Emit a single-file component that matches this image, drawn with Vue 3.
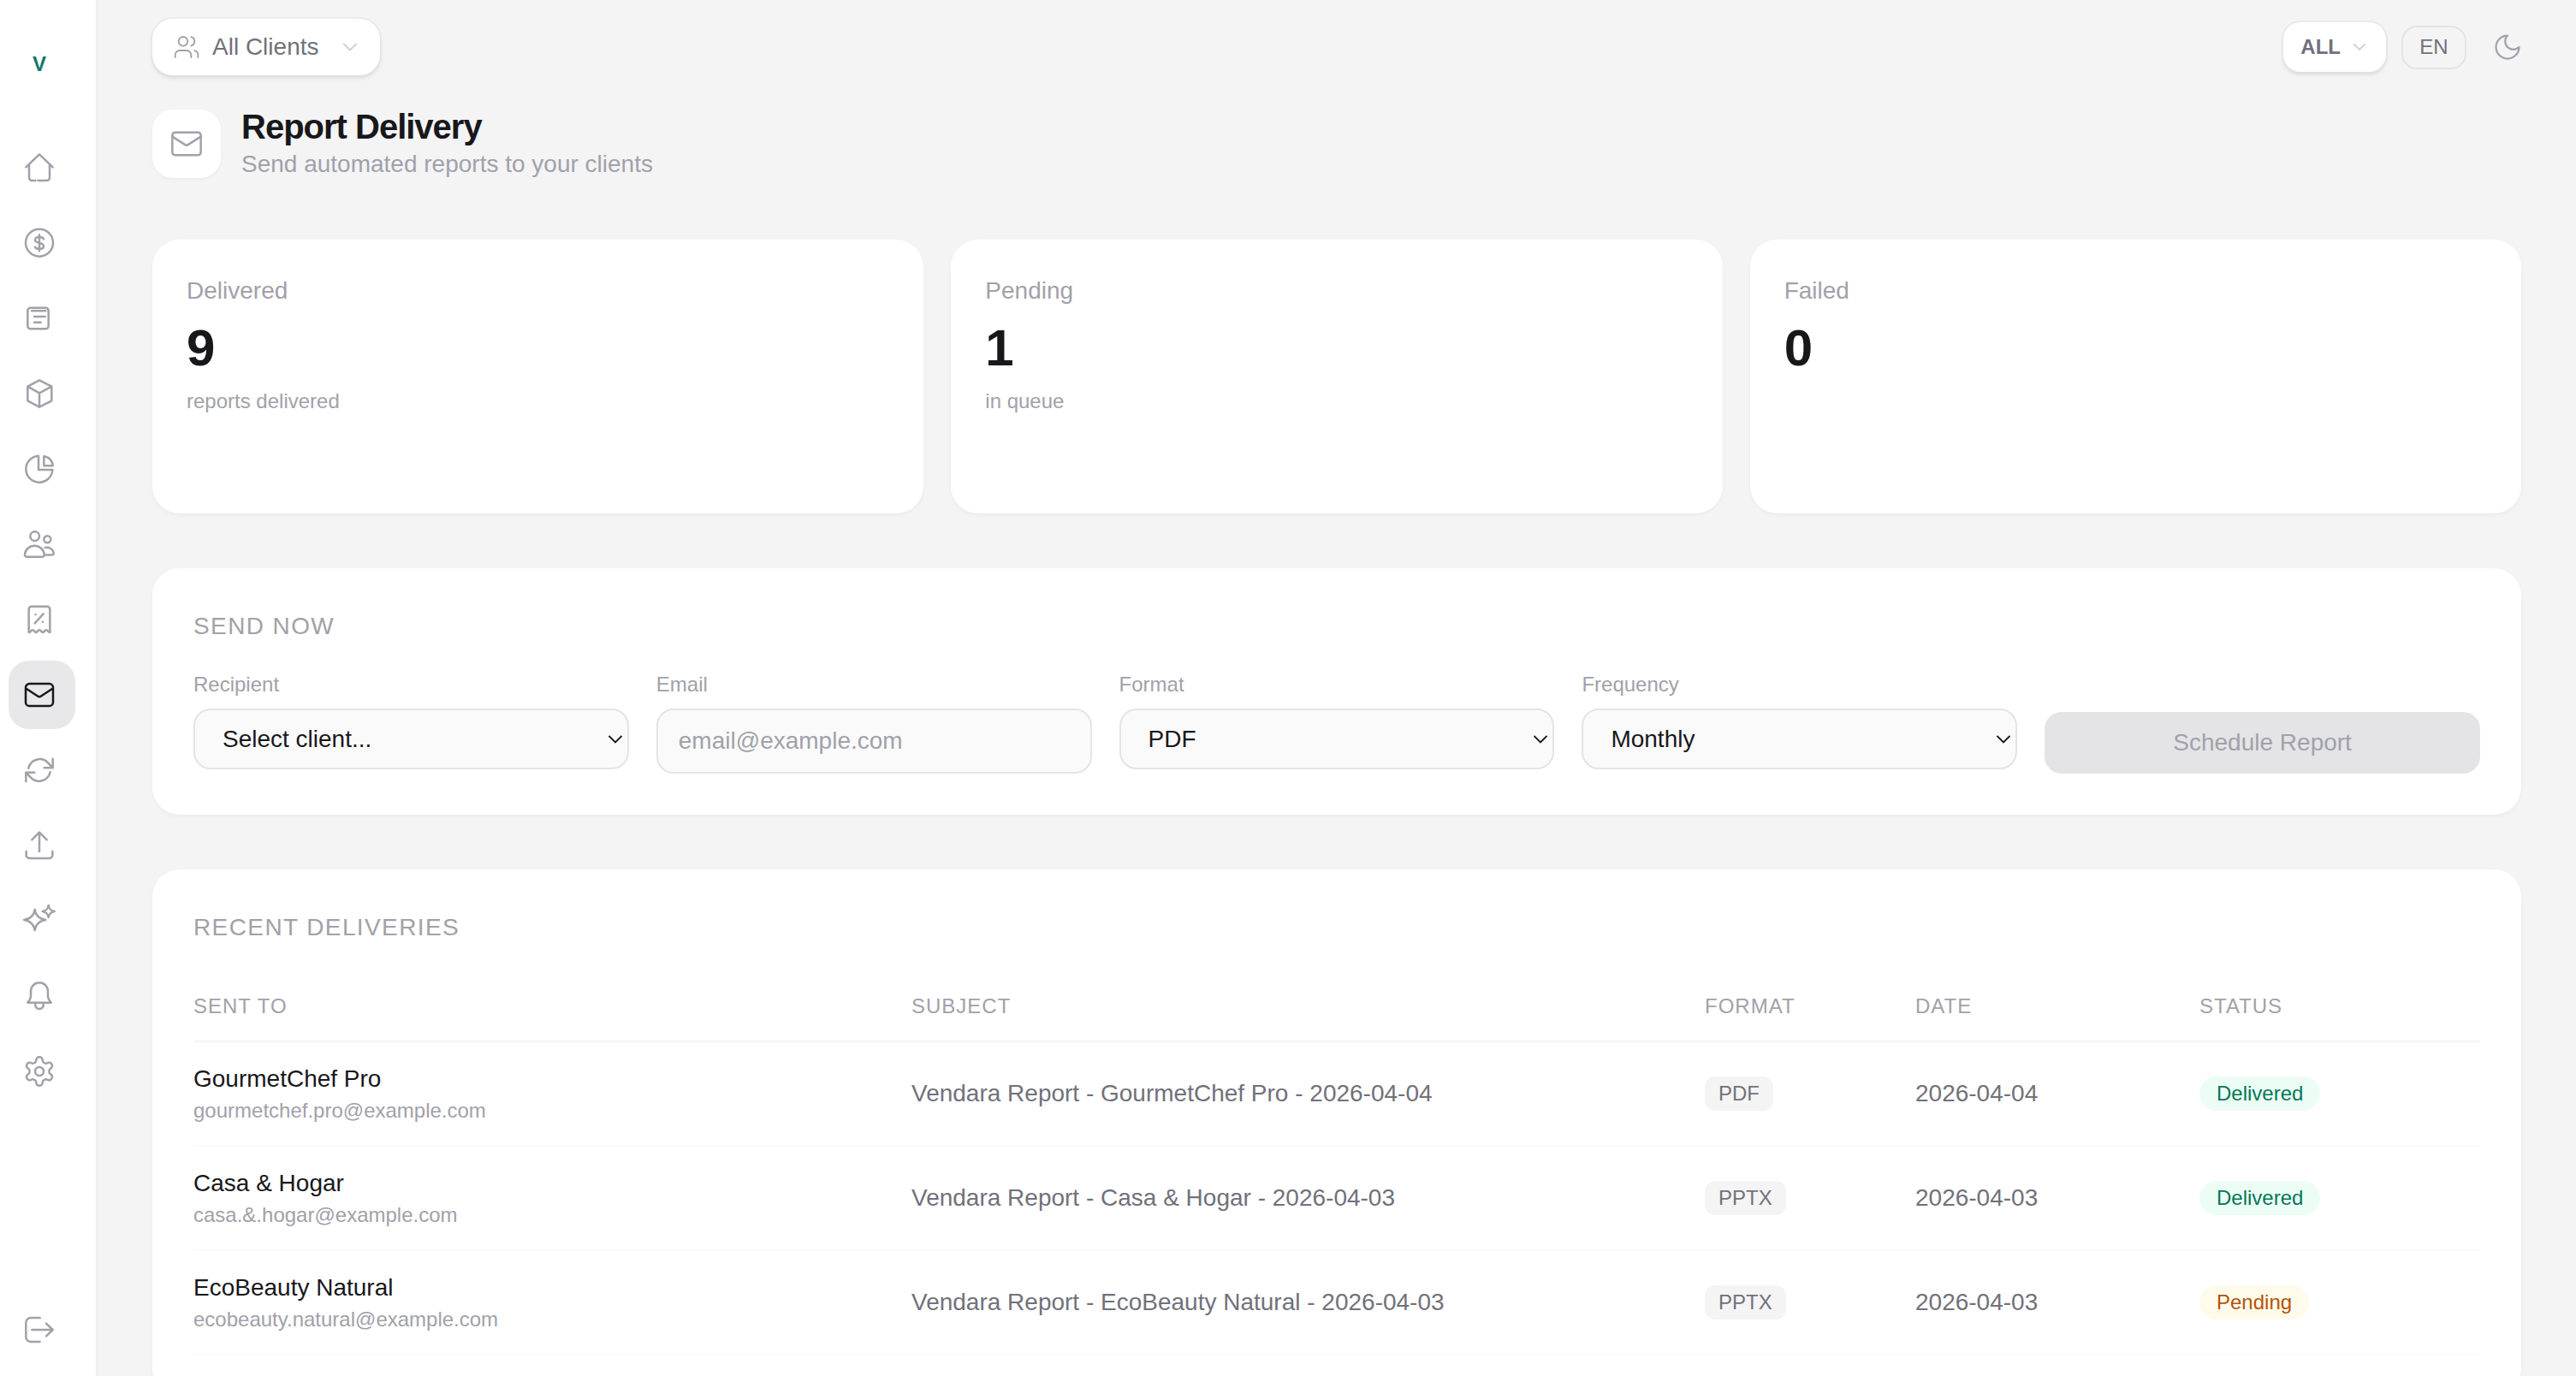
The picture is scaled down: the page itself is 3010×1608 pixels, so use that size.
<template>
  <div class="layout">
    <aside class="sidebar">
      <div class="logo">V</div>
      <nav class="nav">
        <a
          v-for="item in navItems"
          :key="item.name"
          class="nav-item"
          :class="{ active: item.name === 'reports' }"
          :title="item.name"
        >
          <svg class="nav-icon" viewBox="0 0 24 24"><path :d="item.d" /></svg>
        </a>
      </nav>
      <a class="nav-item logout" title="logout">
        <svg class="nav-icon" viewBox="0 0 24 24">
          <path d="M12.4 3H6a3.4 3.4 0 0 0-3.4 3.4v10A3.4 3.4 0 0 0 6 19.8h6.4M6.8 11.4h14.6M16.8 7l4.6 4.4-4.6 4.4" />
        </svg>
      </a>
    </aside>

    <main class="main">
      <header class="topbar">
        <button class="client-switch" type="button">
          <svg class="switch-icon" viewBox="0 0 24 24">
            <path d="M16 21v-2a4 4 0 0 0-4-4H6a4 4 0 0 0-4 4v2M13 7a4 4 0 1 1-8 0 4 4 0 0 1 8 0zM22 21v-2a4 4 0 0 0-3-3.87M16 3.13a4 4 0 0 1 0 7.75" />
          </svg>
          <span>All Clients</span>
          <svg class="switch-chevron" viewBox="0 0 24 24"><path d="m6 9 6 6 6-6" /></svg>
        </button>

        <div class="top-actions">
          <button class="market-switch" type="button">
            <span>ALL</span>
            <svg class="market-chevron" viewBox="0 0 24 24"><path d="m6 9 6 6 6-6" /></svg>
          </button>
          <button class="lang-button" type="button">EN</button>
          <button class="theme-button" type="button">
            <svg class="theme-icon" viewBox="2 2 20 20"><path d="M12 3a6 6 0 0 0 9 9 9 9 0 1 1-9-9Z" /></svg>
          </button>
        </div>
      </header>

      <section class="page-title">
        <div class="title-icon">
          <svg viewBox="0 0 24 24">
            <rect x="2" y="4" width="20" height="16" rx="2" />
            <path d="m22 7-8.97 5.7a1.94 1.94 0 0 1-2.06 0L2 7" />
          </svg>
        </div>
        <div>
          <h1>Report Delivery</h1>
          <p>Send automated reports to your clients</p>
        </div>
      </section>

      <section class="stats">
        <div v-for="stat in stats" :key="stat.label" class="stat-card">
          <div class="stat-label">{{ stat.label }}</div>
          <div class="stat-value">{{ stat.value }}</div>
          <div v-if="stat.note" class="stat-note">{{ stat.note }}</div>
        </div>
      </section>

      <section class="card send-card">
        <h2>SEND NOW</h2>
        <form class="send-form" @submit.prevent>
          <label class="field">
            <span>Recipient</span>
            <div class="select-wrap">
              <select v-model="recipient">
                <option value="">Select client...</option>
                <option v-for="row in deliveries" :key="row.name">{{ row.name }}</option>
              </select>
              <svg class="select-arrow" viewBox="0 0 18 10"><path d="M1.5 1 9 8.5 16.5 1" /></svg>
            </div>
          </label>
          <label class="field">
            <span>Email</span>
            <input type="email" placeholder="email@example.com" />
          </label>
          <label class="field">
            <span>Format</span>
            <div class="select-wrap">
              <select>
                <option>PDF</option>
                <option>PPTX</option>
              </select>
              <svg class="select-arrow" viewBox="0 0 18 10"><path d="M1.5 1 9 8.5 16.5 1" /></svg>
            </div>
          </label>
          <label class="field">
            <span>Frequency</span>
            <div class="select-wrap">
              <select>
                <option>Monthly</option>
                <option>Weekly</option>
              </select>
              <svg class="select-arrow" viewBox="0 0 18 10"><path d="M1.5 1 9 8.5 16.5 1" /></svg>
            </div>
          </label>
          <button class="schedule-button" type="submit" disabled>Schedule Report</button>
        </form>
      </section>

      <section class="card table-card">
        <h2>RECENT DELIVERIES</h2>
        <table class="table">
          <thead>
            <tr>
              <th class="col-name">SENT TO</th>
              <th class="col-subject">SUBJECT</th>
              <th class="col-format">FORMAT</th>
              <th class="col-date">DATE</th>
              <th>STATUS</th>
            </tr>
          </thead>
          <tbody>
            <tr v-for="row in deliveries" :key="row.name">
              <td>
                <div class="client-name">{{ row.name }}</div>
                <div class="client-email">{{ row.email }}</div>
              </td>
              <td class="muted">Vendara Report - {{ row.name }} - {{ row.date }}</td>
              <td><span class="format-badge">{{ row.format }}</span></td>
              <td class="muted">{{ row.date }}</td>
              <td><span class="status-badge" :class="row.status.toLowerCase()">{{ row.status }}</span></td>
            </tr>
          </tbody>
        </table>
      </section>
    </main>
  </div>
</template>

<script setup>
import { ref } from 'vue'

const recipient = ref('')

const navItems = [
  { name: 'home', d: 'M2.6 11.6 12 2.6l9.4 9M4.8 9.8V19a2 2 0 0 0 2 2h2.4M11 21h6.2a2 2 0 0 0 2-2V9.8' },
  { name: 'revenue', d: 'M12 2.2a9.6 9.6 0 1 0 0 19.2 9.6 9.6 0 0 0 0-19.2zM15 9.2c-.4-1-1.6-1.4-3-1.4-1.8 0-3 .9-3 2.1 0 2.7 6 1.5 6 4.2 0 1.2-1.2 2.1-3 2.1-1.4 0-2.6-.5-3-1.5M12 6.2v11.4' },
  { name: 'orders', d: 'M5.8 4.6h10.6a2 2 0 0 1 2 2v10.8a2 2 0 0 1-2 2H5.8a2 2 0 0 1-2-2V6.6a2 2 0 0 1 2-2zM6.6 6.8h9.8M8.4 10.8H16M8.4 14.8H13' },
  { name: 'products', d: 'M12 2.6 20.6 7v10L12 21.4 3.8 17V7zM3.8 7l8.2 4.6L20.6 7M12 11.6v9.8' },
  { name: 'analytics', d: 'M11.4 2.8a9.3 9.3 0 1 0 9.8 9.8h-9.8zM15.2 3.2v6.6h6.2a6.8 6.8 0 0 0-6.2-6.6z' },
  { name: 'clients', d: 'M12 6.4a3.2 3.2 0 1 1-6.4 0 3.2 3.2 0 0 1 6.4 0zM20 8.6a2.4 2.4 0 1 1-4.8 0 2.4 2.4 0 0 1 4.8 0zM8.6 13c-3.6 0-6.6 2.8-6.8 6.4-.1.9.6 1.5 1.4 1.5H14c.8 0 1.5-.6 1.4-1.5C15.2 15.8 12.2 13 8.6 13zM16 14.4c2.8-.6 5.6 1 6 3.8.1.8-.5 1.3-1.2 1.3H15.6' },
  { name: 'invoices', d: 'M4.6 21V4.8a2 2 0 0 1 2-2h10.8a2 2 0 0 1 2 2V21c-1 .2-1.6-1.6-2.6-1.6-1.2 0-1.6 1.6-2.4 1.6s-1.2-1.6-2.4-1.6-1.6 1.6-2.4 1.6-1.2-1.6-2.4-1.6-1.6 1.8-2.6 1.6zM14.8 8l-6 6.6M9.4 8.4h.01M14.4 13.6h.01' },
  { name: 'reports', d: 'M5 4.2h14a2.6 2.6 0 0 1 2.6 2.6v10.4a2.6 2.6 0 0 1-2.6 2.6H5a2.6 2.6 0 0 1-2.6-2.6V6.8A2.6 2.6 0 0 1 5 4.2zM2.6 7.5l8.2 5.4a2.2 2.2 0 0 0 2.4 0l8.2-5.4' },
  { name: 'sync', d: 'M4.4 10.6A8 8 0 0 1 18 6.8l3.4 3.6M21.4 4v6.4h-6M19.6 13.4A8 8 0 0 1 6 17.2l-3.4-3.6M2.6 20v-6.4h6' },
  { name: 'uploads', d: 'M12 16.2V2.8M6.8 8 12 2.8 17.2 8M2.8 16.2v2.6A2.2 2.2 0 0 0 5 21h14a2.2 2.2 0 0 0 2.2-2.2v-2.6' },
  { name: 'insights', d: 'M8.8 4.2c.4 3.6 3.2 6.6 7.5 7.2-4.3.6-7.1 3.6-7.5 7.2-.4-3.6-3.2-6.6-7.5-7.2 4.3-.6 7.1-3.6 7.5-7.2zM18.4 1.2c.2 2 2 3.8 4.2 4.2-2.2.4-4 2.2-4.2 4.2-.2-2-2-3.8-4.2-4.2 2.2-.4 4-2.2 4.2-4.2z' },
  { name: 'alerts', d: 'M12 2.6c-3.4 0-6 2.7-6 6V12c0 1.8-1 3.2-2.2 4.6h16.4c-1.2-1.4-2.2-2.8-2.2-4.6V8.6c0-3.3-2.6-6-6-6zM9 16.8c0 2.6 1.2 4.2 3 4.2s3-1.6 3-4.2' },
  { name: 'settings', d: 'M12.22 2h-.44a2 2 0 0 0-2 2v.18a2 2 0 0 1-1 1.73l-.43.25a2 2 0 0 1-2 0l-.15-.08a2 2 0 0 0-2.73.73l-.22.38a2 2 0 0 0 .73 2.73l.15.1a2 2 0 0 1 1 1.72v.51a2 2 0 0 1-1 1.74l-.15.09a2 2 0 0 0-.73 2.73l.22.38a2 2 0 0 0 2.73.73l.15-.08a2 2 0 0 1 2 0l.43.25a2 2 0 0 1 1 1.73V20a2 2 0 0 0 2 2h.44a2 2 0 0 0 2-2v-.18a2 2 0 0 1 1-1.73l.43-.25a2 2 0 0 1 2 0l.15.08a2 2 0 0 0 2.73-.73l.22-.39a2 2 0 0 0-.73-2.73l-.15-.08a2 2 0 0 1-1-1.74v-.5a2 2 0 0 1 1-1.74l.15-.09a2 2 0 0 0 .73-2.73l-.22-.38a2 2 0 0 0-2.73-.73l-.15.08a2 2 0 0 1-2 0l-.43-.25a2 2 0 0 1-1-1.73V4a2 2 0 0 0-2-2zM15 12a3 3 0 1 1-6 0 3 3 0 0 1 6 0z' }
]

const stats = [
  { label: 'Delivered', value: 9, note: 'reports delivered' },
  { label: 'Pending', value: 1, note: 'in queue' },
  { label: 'Failed', value: 0, note: '' }
]

const deliveries = [
  { name: 'GourmetChef Pro', email: 'gourmetchef.pro@example.com', format: 'PDF', date: '2026-04-04', status: 'Delivered' },
  { name: 'Casa & Hogar', email: 'casa.&.hogar@example.com', format: 'PPTX', date: '2026-04-03', status: 'Delivered' },
  { name: 'EcoBeauty Natural', email: 'ecobeauty.natural@example.com', format: 'PPTX', date: '2026-04-03', status: 'Pending' }
]
</script>

<style>
html,
body {
  margin: 0;
  background: #f4f4f5;
}
</style>

<style scoped>
.layout {
  display: flex;
  height: 100vh;
  overflow: hidden;
  background: #f4f4f5;
  font-family: "Liberation Sans", Arial, sans-serif;
  color: #18181b;
}

.sidebar {
  flex: none;
  display: flex;
  flex-direction: column;
  width: 114px;
  box-sizing: border-box;
  background: #ffffff;
  border-right: 2px solid #eeeeef;
}

.logo {
  height: 156px;
  padding-top: 58px;
  box-sizing: border-box;
  width: 92px;
  text-align: center;
  font-size: 24px;
  line-height: 34px;
  font-weight: 700;
  color: #0f766e;
}

.nav {
  display: flex;
  flex-direction: column;
  gap: 8px;
}

.nav-item {
  display: flex;
  align-items: center;
  width: 78px;
  height: 80px;
  margin-left: 10px;
  padding-left: 16px;
  box-sizing: border-box;
  border-radius: 24px;
  color: #a1a1aa;
}

.nav-item.active {
  background: #e8e8ea;
  color: #18181b;
}

.logout {
  margin-top: auto;
  margin-bottom: 13px;
}

.nav-icon {
  width: 40px;
  height: 40px;
  fill: none;
  stroke: currentColor;
  stroke-width: 1.5;
  stroke-linecap: round;
  stroke-linejoin: round;
}

.main {
  flex: 1;
  min-width: 0;
  padding: 22px 64px 0;
  overflow: hidden;
}

.topbar {
  display: flex;
  align-items: center;
  justify-content: space-between;
  height: 66px;
  margin-bottom: 40px;
}

button {
  font-family: inherit;
}

.client-switch {
  display: flex;
  align-items: center;
  height: 66px;
  padding: 0 21px 0 24px;
  border: none;
  border-radius: 24px;
  background: #ffffff;
  box-shadow: 0 0 0 2px rgba(228, 228, 231, 0.55), 0 3px 4px rgba(161, 161, 170, 0.35);
  font-size: 28px;
  color: #71717a;
}

.switch-icon {
  width: 32px;
  height: 32px;
  margin-right: 14px;
  fill: none;
  stroke: #a1a1aa;
  stroke-width: 1.4;
  stroke-linecap: round;
  stroke-linejoin: round;
}

.switch-chevron,
.market-chevron {
  fill: none;
  stroke: #d4d4d8;
  stroke-width: 2;
  stroke-linecap: round;
  stroke-linejoin: round;
}

.switch-chevron {
  width: 28px;
  height: 28px;
  margin-left: 23px;
}

.top-actions {
  display: flex;
  align-items: center;
}

.market-switch {
  display: flex;
  align-items: center;
  height: 58px;
  padding: 0 19px 0 20px;
  border: none;
  border-radius: 20px;
  background: #ffffff;
  box-shadow: 0 0 0 2px rgba(228, 228, 231, 0.55), 0 3px 4px rgba(161, 161, 170, 0.35);
  font-size: 24px;
  font-weight: 700;
  color: #71717a;
}

.market-chevron {
  width: 24px;
  height: 24px;
  margin-left: 10px;
}

.lang-button {
  width: 76px;
  height: 51px;
  margin-left: 18px;
  padding: 0;
  border: 2px solid #e4e4e7;
  border-radius: 18px;
  background: transparent;
  font-size: 24px;
  color: #71717a;
}

.theme-button {
  display: flex;
  align-items: center;
  justify-content: center;
  width: 32px;
  height: 32px;
  margin-left: 32px;
  padding: 0;
  border: none;
  background: transparent;
}

.theme-icon {
  width: 30px;
  height: 30px;
  fill: none;
  stroke: #a1a1aa;
  stroke-width: 1.5;
  stroke-linecap: round;
  stroke-linejoin: round;
}

.page-title {
  display: flex;
  align-items: center;
  gap: 24px;
  height: 80px;
  margin-bottom: 72px;
}

.title-icon {
  display: flex;
  align-items: center;
  justify-content: center;
  width: 80px;
  height: 80px;
  border-radius: 24px;
  background: #ffffff;
  box-shadow: 0 2px 4px rgba(0, 0, 0, 0.04);
}

.title-icon svg {
  width: 40px;
  height: 40px;
  fill: none;
  stroke: #a1a1aa;
  stroke-width: 1.5;
  stroke-linecap: round;
  stroke-linejoin: round;
}

h1 {
  margin: 0;
  font-size: 40px;
  line-height: 44px;
  font-weight: 700;
  letter-spacing: -1px;
  color: #18181b;
}

.page-title p {
  margin: 4px 0 0;
  font-size: 28px;
  line-height: 36px;
  color: #a1a1aa;
}

.stats {
  display: grid;
  grid-template-columns: repeat(3, 1fr);
  gap: 32px;
  margin-bottom: 64px;
}

.stat-card {
  height: 320px;
  padding: 40px;
  box-sizing: border-box;
  border-radius: 32px;
  background: #ffffff;
  box-shadow: 0 2px 4px rgba(0, 0, 0, 0.04);
}

.stat-label {
  font-size: 28px;
  line-height: 40px;
  color: #a1a1aa;
}

.stat-value {
  margin-top: 15px;
  font-size: 60px;
  line-height: 64px;
  font-weight: 700;
  color: #18181b;
}

.stat-note {
  margin-top: 14px;
  font-size: 24px;
  line-height: 32px;
  color: #a1a1aa;
}

.card {
  margin-bottom: 64px;
  padding: 48px;
  border-radius: 32px;
  background: #ffffff;
  box-shadow: 0 2px 4px rgba(0, 0, 0, 0.04);
}

h2 {
  margin: 0;
  font-size: 28px;
  line-height: 40px;
  font-weight: 400;
  letter-spacing: 1.4px;
  color: #a1a1aa;
}

.send-form {
  display: grid;
  grid-template-columns: repeat(5, 1fr);
  gap: 32px;
  margin-top: 32px;
}

.field {
  display: flex;
  flex-direction: column;
  min-width: 0;
}

.field > span {
  margin-bottom: 12px;
  font-size: 24px;
  line-height: 32px;
  color: #a1a1aa;
}

.select-wrap {
  position: relative;
}

.select-wrap select {
  display: block;
  width: 100%;
  height: 71px;
  padding: 0 32px;
  box-sizing: border-box;
  border: 2px solid #e4e4e7;
  border-radius: 20px;
  background: #fafafa;
  appearance: none;
  font-family: inherit;
  font-size: 28px;
  color: #18181b;
  outline: none;
}

.select-arrow {
  position: absolute;
  top: 31px;
  right: 7px;
  width: 18px;
  height: 10px;
  fill: none;
  stroke: #18181b;
  stroke-width: 1.8;
  pointer-events: none;
}

.field input {
  display: block;
  width: 100%;
  height: 76px;
  padding: 0 24px;
  box-sizing: border-box;
  border: 2px solid #e4e4e7;
  border-radius: 20px;
  background: #fafafa;
  font-family: inherit;
  font-size: 28px;
  color: #18181b;
  outline: none;
}

.field input::placeholder {
  color: #a1a1aa;
}

.schedule-button {
  align-self: end;
  height: 72px;
  border: none;
  border-radius: 20px;
  background: #e4e4e7;
  font-size: 28px;
  color: #a1a1aa;
}

.table-card {
  margin-bottom: 0;
}

.table {
  width: 100%;
  margin-top: 32px;
  border-collapse: separate;
  border-spacing: 0;
  table-layout: fixed;
}

.table th {
  padding: 24px 0;
  border-bottom: 2px solid #f4f4f5;
  font-size: 24px;
  line-height: 32px;
  font-weight: 400;
  letter-spacing: 1px;
  text-align: left;
  color: #a1a1aa;
}

.col-name {
  width: 839px;
}

.col-subject {
  width: 927px;
}

.col-format {
  width: 246px;
}

.col-date {
  width: 332px;
}

.table td {
  height: 122px;
  padding: 0;
  box-sizing: border-box;
  border-bottom: 2px solid #fafafa;
  vertical-align: middle;
}

.client-name {
  font-size: 28px;
  line-height: 36px;
  color: #18181b;
}

.client-email {
  margin-top: 3px;
  font-size: 24px;
  line-height: 32px;
  color: #a1a1aa;
}

.muted {
  font-size: 28px;
  color: #71717a;
}

.format-badge,
.status-badge {
  display: inline-block;
  height: 40px;
  box-sizing: border-box;
  font-size: 24px;
  line-height: 40px;
  vertical-align: middle;
}

.format-badge {
  padding: 0 16px;
  border-radius: 12px;
  background: #f4f4f5;
  color: #71717a;
}

.status-badge {
  padding: 0 20px;
  border-radius: 20px;
}

.status-badge.delivered {
  background: #ecfdf5;
  color: #047857;
}

.status-badge.pending {
  background: #fffbeb;
  color: #b45309;
}
</style>
